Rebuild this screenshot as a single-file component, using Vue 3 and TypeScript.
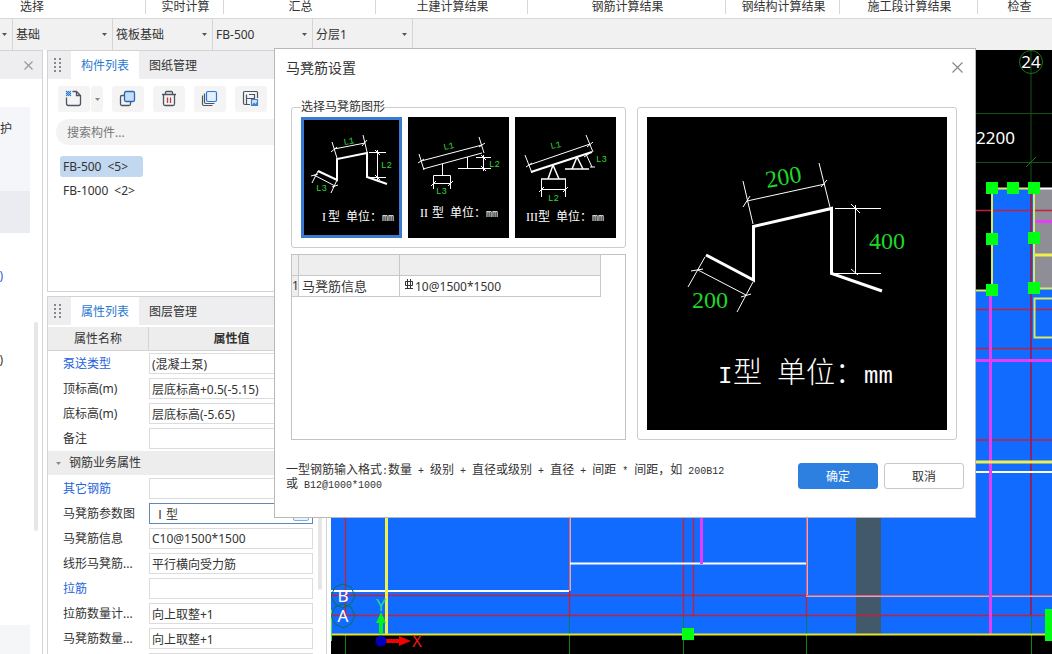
<script setup lang="ts">
import { ref } from 'vue'

interface Label { x: number; y: number; text: string; angle?: number }
interface Shape { name: string; thin: string; thick: string; medium: string; labels: Label[]; numeral: string; captionX: number; captionY: number }
interface Prop { id: string; name: string; value: string; link?: boolean; active?: boolean }

const groups = [
  { name: '选择', width: 'w-first' },
  { name: '实时计算', width: 'w-live' },
  { name: '汇总', width: 'w-sum' },
  { name: '土建计算结果', width: 'w-sum' },
  { name: '钢筋计算结果', width: 'w-rebar' },
  { name: '钢结构计算结果', width: 'w-steel' },
  { name: '施工段计算结果', width: 'w-stage' },
  { name: '检查', width: 'w-check' },
]

const selectors = [
  { label: '构件大类', value: '基础' },
  { label: '构件类型', value: '筏板基础' },
  { label: '构件名称', value: 'FB-500' },
  { label: '分层', value: '分层1' },
]

const components = [
  { name: 'FB-500', count: '<5>' },
  { name: 'FB-1000', count: '<2>' },
]
const selectedComponent = ref(0)
const keyword = ref('')

const basicProps = ref<Prop[]>([
  { id: 'pump', name: '泵送类型', value: '(混凝土泵)', link: true },
  { id: 'top', name: '顶标高(m)', value: '层底标高+0.5(-5.15)' },
  { id: 'bottom', name: '底标高(m)', value: '层底标高(-5.65)' },
  { id: 'note', name: '备注', value: '' },
])
const rebarProps = ref<Prop[]>([
  { id: 'other', name: '其它钢筋', value: '', link: true },
  { id: 'figure', name: '马凳筋参数图', value: 'Ⅰ型', active: true },
  { id: 'info', name: '马凳筋信息', value: 'C10@1500*1500' },
  { id: 'linear', name: '线形马凳筋...', value: '平行横向受力筋' },
  { id: 'tie', name: '拉筋', value: '', link: true },
  { id: 'tiecount', name: '拉筋数量计...', value: '向上取整+1' },
  { id: 'count', name: '马凳筋数量...', value: '向上取整+1' },
  { id: 'area', name: '', value: '' },
])

const shapes: Shape[] = [
  {
    name: 'I型',
    thick: 'M17 54L36 63V42L66 36V60L86 67',
    medium: '',
    thin: 'M31 25L36 41M62 18L66 35M33 32L64 26M30 35L36 30M61 29L66 23M68 35.5H85M66 60.5H85M76.5 33V63M74 33L79 38M74 58L79 63M17 54L11 66M36 63L30 76M13 58L34 69M10 59L17 57M31 70L37 68',
    labels: [{ x: 43, y: 28, text: 'L1', angle: -10 }, { x: 80, y: 51, text: 'L2' }, { x: 15, y: 74, text: 'L3' }],
    numeral: 'I', captionX: 21, captionY: 104,
  },
  {
    name: 'II型',
    thick: '',
    medium: '',
    thin: 'M13 44L74 28M15 52L74 36M11 37L16 53M71 20L76 36M10 46L16 42M71 30L77 26M34.5 47V58M25.5 72V58.5H42.5V72M25 66.5H43M23 69L28 64M40 69L45 64M59.5 40V51M50 51.5H83M68 40.5H83M75.5 38V54M73 38L78 43M73 49L78 54',
    labels: [{ x: 36, y: 33, text: 'L1', angle: -12 }, { x: 81, y: 50, text: 'L2' }, { x: 28, y: 77, text: 'L3' }],
    numeral: 'II', captionX: 12, captionY: 100,
  },
  {
    name: 'III型',
    thick: 'M16 55L77 35',
    medium: 'M38 48L33 62M38 48L44 62M26 62H51M62 40L57 52M62 40L68 52M50 52H74',
    thin: 'M14 48L75 27M10 38L17 56M71 18L78 35M11 50L17 46M72 30L78 25M26.5 62V80M50.5 62V80M26 72.5H51M24 75L29 70M48 75L53 70M71 37L77 50M75 50H80M69 40L75 36',
    labels: [{ x: 36, y: 32, text: 'L1', angle: -12 }, { x: 81, y: 45, text: 'L3' }, { x: 33, y: 84, text: 'L2' }],
    numeral: 'III', captionX: 11, captionY: 104,
  },
]
const selectedShape = ref(0)
const rebarInfo = ref('10@1500*1500')

const hintLines = [
  '一型钢筋输入格式:数量 + 级别 + 直径或级别 + 直径 + 间距 * 间距，如 200B12',
  '或 B12@1000*1000',
]
const splitRuns = (line: string) => (line.match(/[\x20-\x7e]+|[^\x20-\x7e]+/g) ?? []).map((text) => ({ text, latin: /^[\x20-\x7e]/.test(text) }))

const handles = [[992, 188], [1013, 188], [1034, 188], [992, 239], [1034, 238], [992, 290], [1034, 288], [688, 634]]
</script>

<template>
  <div class="app">
    <header class="ribbon">
      <div v-for="g in groups" :key="g.name" class="group" :class="g.width">{{ g.name }}</div>
    </header>

    <div class="selectors">
      <span class="stub"><svg width="5" height="3"><path d="M0 0H5L2.5 3Z" fill="#555" /></svg></span>
      <div v-for="s in selectors" :key="s.label" class="picker">
        <select :aria-label="s.label"><option>{{ s.value }}</option></select>
        <svg width="5" height="3"><path d="M0 0H5L2.5 3Z" fill="#555" /></svg>
      </div>
    </div>

    <main class="workspace">
      <aside class="nav">
        <div class="nav-head">
          <button class="plain" aria-label="关闭导航"><svg width="9" height="9"><path d="M0.5 0.5L8.5 8.5M8.5 0.5L0.5 8.5" stroke="#999" stroke-width="1.2" /></svg></button>
        </div>
        <div class="nav-body">
          <div class="nav-list">
            <div class="nav-block first">护</div>
            <div class="nav-block second"></div>
            <a href="#" class="paren link">)</a>
            <span class="paren">)</span>
            <div class="nav-block last"></div>
          </div>
          <div class="nav-scroll"></div>
        </div>
      </aside>

      <div class="docks">
        <section class="panel list-panel">
          <div class="tabs">
            <svg class="grip" width="7" height="14" fill="#888"><path d="M0 0h2v2h-2zM5 0h2v2h-2zM0 4h2v2h-2zM5 4h2v2h-2zM0 8h2v2h-2zM5 8h2v2h-2zM0 12h2v2h-2zM5 12h2v2h-2z" /></svg>
            <button class="tab on">构件列表</button>
            <button class="tab">图纸管理</button>
          </div>
          <div class="tools">
            <div class="split">
              <button class="tool" aria-label="新建">
                <svg width="32" height="26" fill="none" stroke="#4d5563" stroke-width="1.3">
                  <path d="M8.5 11.5V17.5Q8.5 19.5 10.5 19.5H20.5Q22.5 19.5 22.5 17.5V9.5L18.5 5.5H14.5M18.5 5.5V9.5H22.5" />
                  <path d="M8 5h1v1h-1zM10 5h1v1h-1zM12 5h1v1h-1zM9 6h1v1h-1zM11 6h1v1h-1zM8 7h1v1h-1zM10 7h1v1h-1zM12 7h1v1h-1zM9 8h1v1h-1zM11 8h1v1h-1zM8 9h1v1h-1zM10 9h1v1h-1zM12 9h1v1h-1z" fill="#2878d8" stroke="#2878d8" stroke-width="0.3" />
                </svg>
              </button>
              <button class="tool slim" aria-label="更多新建"><svg width="5" height="3"><path d="M0 0H5L2.5 3Z" fill="#888" /></svg></button>
            </div>
            <button class="tool" aria-label="复制">
              <svg width="32" height="26" fill="none" stroke-width="1.3">
                <rect x="8.5" y="9.5" width="10" height="10" rx="1.5" stroke="#4d5563" />
                <rect x="12.5" y="5.5" width="10" height="10" rx="1.5" fill="#c7dcf8" stroke="#2a67b7" />
              </svg>
            </button>
            <button class="tool" aria-label="删除">
              <svg width="32" height="26" fill="none" stroke="#4d5563" stroke-width="1.3">
                <path d="M9 8.5H23M12.5 8.5V6.5Q12.5 5.5 13.5 5.5H18.5Q19.5 5.5 19.5 6.5V8.5M10.5 8.5V18Q10.5 19.5 12 19.5H20Q21.5 19.5 21.5 18V8.5" />
                <path d="M14.5 11.5V17M17.5 11.5V17" stroke="#c43a3a" />
              </svg>
            </button>
            <button class="tool" aria-label="层间复制">
              <svg width="32" height="26" fill="none" stroke="#4d5563" stroke-width="1.2">
                <path d="M8.5 9.5V18Q8.5 19.5 10 19.5H18.5M10.5 7.5V16Q10.5 17.5 12 17.5H20.5" />
                <rect x="12.5" y="5.5" width="10" height="10" rx="1.5" fill="#e3effd" stroke="#2878d8" />
              </svg>
            </button>
            <button class="tool" aria-label="存档">
              <svg width="32" height="26" fill="none" stroke="#4d5563" stroke-width="1.2">
                <path d="M15 18.5H10Q8.5 18.5 8.5 17V6.5Q8.5 5.5 9.5 5.5H21.5Q22.5 5.5 22.5 6.5V12M11.5 18.5V8.5M11.5 12.5H19.5V8.5H14" />
                <path d="M16.5 13.5H22.5V19.5H16.5Z" fill="#cfe2fa" stroke="#3f82d0" />
                <path d="M17 19L19 16.5L20.5 18L22 16V19Z" fill="#3f82d0" stroke="none" />
              </svg>
            </button>
          </div>
          <input v-model="keyword" class="search" type="search" aria-label="搜索构件" placeholder="搜索构件..." />
          <div class="items">
            <button v-for="(c, i) in components" :key="c.name" class="item" :class="{ on: i === selectedComponent }" @click="selectedComponent = i">
              {{ c.name }}<span class="count">{{ c.count }}</span>
            </button>
          </div>
        </section>

        <section class="panel prop-panel">
          <div class="tabs">
            <svg class="grip" width="7" height="14" fill="#888"><path d="M0 0h2v2h-2zM5 0h2v2h-2zM0 4h2v2h-2zM5 4h2v2h-2zM0 8h2v2h-2zM5 8h2v2h-2zM0 12h2v2h-2zM5 12h2v2h-2z" /></svg>
            <button class="tab on">属性列表</button>
            <button class="tab">图层管理</button>
          </div>
          <div class="prop-body">
            <table class="props">
              <thead>
                <tr><th class="name">属性名称</th><th class="value">属性值</th></tr>
              </thead>
              <tbody>
                <tr v-for="p in basicProps" :key="p.id">
                  <td class="name"><label :for="p.id" :class="{ link: p.link }">{{ p.name }}</label></td>
                  <td><input :id="p.id" v-model="p.value" type="text" /></td>
                </tr>
                <tr class="section">
                  <td colspan="2"><svg width="5" height="4"><path d="M0 0H5L2.5 3Z" fill="#888" /></svg>钢筋业务属性</td>
                </tr>
                <tr v-for="p in rebarProps" :key="p.id">
                  <td class="name"><label :for="p.id" :class="{ link: p.link }">{{ p.name }}</label></td>
                  <td>
                    <div class="field" :class="{ active: p.active }">
                      <input :id="p.id" v-model="p.value" type="text" />
                      <button v-if="p.active" class="more" aria-label="选择参数图"></button>
                    </div>
                  </td>
                </tr>
              </tbody>
            </table>
            <div class="prop-scroll"></div>
          </div>
        </section>
      </div>

      <section class="canvas">
        <svg viewBox="331 50 721 604" preserveAspectRatio="xMinYMin slice" fill="none">
          <path d="M331 290H992V188H1052V634H331Z" fill="#126bff" />
          <path d="M1034 188H1052V288H1034Z" fill="#8f8d96" />
          <path d="M856 500H881V634H856Z" fill="#42586b" />
          <path d="M976 113.5H1052M976 162.5H1052M1031 50V188" stroke="#155215" />
          <path d="M1026 167L1036 157" stroke="#1c7a1c" />
          <g stroke="#c4203c" stroke-width="1.4">
            <path d="M976 210.5H1052M976 309.5H1052M976 348.5H1052M976 440H1052" />
            <path d="M345.5 500V615M683.5 500V615M693.5 500V615M331 595.5H806M331 615.5H1046M569.5 591V615M806.5 596V615" />
          </g>
          <path d="M1031 188V615" stroke="#8c2468" stroke-width="2" />
          <path d="M569.5 615V634M683.5 615V634M806.5 615V634M1031.5 615V634" stroke="#0b7a58" />
          <path d="M345.5 634V654M569.5 634V654M683.5 634V654M806.5 634V654M1031.5 634V654" stroke="#148014" />
          <path d="M570 500V591M807 500V596M806 596H1052" stroke="#d8a8c8" stroke-width="2" />
          <path d="M569.5 500V591M806.5 500V595.5H1052" stroke="#e06070" />
          <path d="M331 591H569M570 563.5H806M976 472H1052M1040 188.5H1052" stroke="#fff" stroke-width="2" />
          <path d="M990.5 290V634M701.5 500V564M976 360.5H1052M1034 221.5H1052" stroke="#e63cf5" stroke-width="3" />
          <path d="M386.5 500V634M976 462H1052M1034 255H1052" stroke="#eef04c" stroke-width="3" />
          <path d="M976 290.5H992V188.5H1034V288.5H1052M1052 298.5H1034.5V337.5H1052" stroke="#dcea60" stroke-width="2" />
          <path d="M331 634.5H1052" stroke="#dfe632" stroke-width="2" />
          <path d="M331.5 610V641" stroke="#36e84a" />
          <path v-for="(h, i) in handles" :key="i" :d="`M${h[0] - 6} ${h[1] - 6}h12v12h-12z`" fill="#00ff12" />
          <path d="M1045 609H1052V641H1045Z" fill="#00ff12" />
          <circle cx="1031" cy="62" r="11.5" stroke="#147a14" />
          <path d="M343 584L351 587L355 596L351 604L343 608L335 604L331 596L335 587ZM343 604L351 607L355 616L351 624L343 628L335 624L331 616L335 607Z" stroke="#087050" />
          <g class="cad-text" fill="#fff">
            <text x="1031" y="68" text-anchor="middle">24</text>
            <text x="976" y="144">2200</text>
            <text x="343" y="602" text-anchor="middle">B</text>
            <text x="343" y="622" text-anchor="middle">A</text>
            <text x="381" y="611" text-anchor="middle" fill="#20d8a0">Y</text>
            <text x="417" y="647" text-anchor="middle" fill="#f01818">X</text>
          </g>
          <path d="M379 634V623H376L381 612L386 623H383V634Z" fill="#00f020" />
          <path d="M386 639H399V636L411 641L399 646V643H386Z" fill="#f40000" />
          <circle cx="381" cy="641" r="5.5" fill="#0000b8" />
        </svg>
      </section>
    </main>

    <div class="dialog" role="dialog" aria-labelledby="dialog-title">
      <div class="dialog-head">
        <h1 id="dialog-title">马凳筋设置</h1>
        <button class="plain" aria-label="关闭"><svg width="11" height="11"><path d="M0.5 0.5L10.5 10.5M10.5 0.5L0.5 10.5" stroke="#888" stroke-width="1.2" /></svg></button>
      </div>
      <div class="dialog-body">
        <div class="left">
          <fieldset>
            <legend>选择马凳筋图形</legend>
            <div class="thumbs">
              <button v-for="(s, i) in shapes" :key="s.name" class="thumb" :class="{ on: i === selectedShape }" :aria-label="s.name" @click="selectedShape = i">
                <svg viewBox="0 0 101 121" fill="none" stroke="#fff">
                  <path :d="s.thin" />
                  <path v-if="s.medium" :d="s.medium" stroke-width="1.5" />
                  <path v-if="s.thick" :d="s.thick" stroke-width="2" />
                  <g class="dim" stroke="none">
                    <text v-for="l in s.labels" :key="l.text" :x="l.x" :y="l.y" :transform="l.angle ? `rotate(${l.angle} ${l.x} ${l.y})` : undefined">{{ l.text }}</text>
                  </g>
                  <g class="caption" stroke="none">
                    <text class="numeral" :x="s.captionX" :y="s.captionY">{{ s.numeral }}</text>
                    <text :x="s.captionX + (s.numeral === 'I' ? 6 : 12)" :y="s.captionY">型</text>
                    <text :x="s.captionX + (s.numeral === 'I' ? 24 : 30)" :y="s.captionY">单位：</text>
                    <text class="unit" :x="s.captionX + (s.numeral === 'I' ? 60 : 66)" :y="s.captionY">mm</text>
                  </g>
                </svg>
              </button>
            </div>
          </fieldset>
          <div class="sheet">
            <table>
              <thead><tr><th class="c1"></th><th class="c2"></th><th class="c3"></th></tr></thead>
              <tbody>
                <tr>
                  <th class="c1">1</th>
                  <td class="c2"><label for="rebar-info">马凳筋信息</label></td>
                  <td class="c3">
                    <div class="rebar">
                      <svg width="10" height="10" fill="none" stroke="#333"><path d="M1.5 2.5H8.5V6.5H1.5ZM3.5 0V9M6.5 0V9M1 9.5H9" /></svg>
                      <input id="rebar-info" v-model="rebarInfo" type="text" />
                    </div>
                  </td>
                </tr>
              </tbody>
            </table>
          </div>
        </div>
        <div class="preview">
          <svg viewBox="0 0 300 313" fill="none" stroke="#fff">
            <rect width="300" height="313" fill="#000" stroke="none" />
            <path d="M59 138L106.5 163V109.5L184.5 91.5V156.5L235 174" stroke-width="3" />
            <path d="M96 64L106 107M172 46L183 90M100 84L178 67M96 90L103 79M174 70L180 63M188 91.5H234M185 156.5H234M208.5 88V157M204 87L213 96M204 152L211 158M58 140L41 170M106 165L90 195M51 153L99 178M44 154L56 152M94 180L104 177" />
            <g class="big-dim" stroke="none">
              <text x="120" y="71" transform="rotate(-10 120 71)">200</text>
              <text x="222" y="132">400</text>
              <text x="45" y="191">200</text>
            </g>
            <g class="big-caption" stroke="none">
              <text class="unit" x="71" y="266">I</text>
              <text x="86" y="266">型</text>
              <text x="130" y="266">单位：</text>
              <text class="unit" x="217" y="266">mm</text>
            </g>
          </svg>
        </div>
      </div>
      <div class="dialog-foot">
        <p class="hint">
          <span v-for="line in hintLines" :key="line" class="hint-line"><span v-for="(r, i) in splitRuns(line)" :key="i" :class="{ latin: r.latin }">{{ r.text }}</span></span>
        </p>
        <div class="actions">
          <button class="btn primary">确定</button>
          <button class="btn">取消</button>
        </div>
      </div>
    </div>
  </div>
</template>

<style>
body { overflow: hidden; }
</style>

<style scoped>
.app, .app * { box-sizing: border-box; }
.app {
  position: relative;
  display: flex;
  flex-direction: column;
  height: 100vh;
  overflow: hidden;
  background: #fff;
  color: #333;
  font: 12px/16px "Noto Sans", "Noto Sans CJK SC", sans-serif;
}
button, input, select {
  margin: 0;
  padding: 0;
  border: 0;
  background: none;
  color: inherit;
  font: inherit;
  outline: none;
}
svg { display: block; flex: none; }
table { border-collapse: separate; border-spacing: 0; }
th, td { padding: 0; font-weight: 400; }
.plain { display: flex; }

.ribbon { display: flex; flex: none; height: 19px; border-bottom: 1px solid #d8d8d8; }
.group { flex: none; height: 14px; border-right: 1px solid #d8d8d8; line-height: 14px; text-align: center; white-space: nowrap; }
.w-first { width: 146px; padding-left: 20px; text-align: left; }
.w-live { width: 78px; padding-left: 2px; }
.w-sum { width: 152px; padding-left: 2px; }
.w-rebar { width: 198px; padding-left: 2px; }
.w-steel { width: 114px; padding-left: 2px; }
.w-stage { width: 138px; padding-left: 2px; }
.w-check { width: 84px; }

.selectors { display: flex; flex: none; height: 31px; background: #f1f1f1; }
.stub { display: flex; align-items: center; width: 13px; padding-left: 2px; border-right: 1px solid #d5d5d5; }
.picker { display: flex; align-items: center; width: 100px; padding: 0 5px 0 3px; border-right: 1px solid #d5d5d5; }
.picker select { flex: 1; min-width: 0; height: 30px; appearance: none; }

.workspace { display: flex; flex: 1; min-height: 0; }
.nav { display: flex; flex-direction: column; width: 43px; border: 1px solid #d3d3d3; border-width: 1px 1px 0 0; }
.nav-head { display: flex; align-items: center; justify-content: flex-end; flex: none; height: 28px; padding-right: 9px; background: #eeeef0; }
.nav-body { display: flex; flex: 1; min-height: 0; gap: 4px; }
.nav-list { display: flex; flex-direction: column; width: 30px; padding-top: 28px; overflow: hidden; }
.nav-block { flex: none; }
.first { height: 84px; padding-top: 14px; background: #f5f6f9; }
.second { height: 42px; margin-bottom: 35px; background: #ebecf1; }
.paren { display: flex; justify-content: flex-end; flex: none; width: 3px; height: 16px; margin-bottom: 68px; }
.paren.link { text-decoration: none; }
.last { height: 30px; margin-top: 189px; background: #f5f6f8; }
.nav-scroll { width: 4px; height: 209px; margin-top: 243px; border-radius: 2px; background: #e6e6e6; }

.docks { display: flex; flex-direction: column; gap: 4px; width: 280px; margin: 0 4px; }
.panel { display: flex; flex-direction: column; border: 1px solid #d3d3d3; }
.list-panel { flex: none; height: 242px; }
.prop-panel { flex: 1; min-height: 0; border-bottom: 0; }
.tabs { display: flex; align-items: center; flex: none; height: 28px; background: #eeeef0; }
.grip { margin: 0 10px 0 6px; }
.tab { width: 68px; height: 28px; padding-top: 2px; text-align: center; }
.tab.on { background: #fff; color: #2878d0; }
.tools { display: flex; gap: 9px; padding: 7px 0 7px 10px; }
.split { display: flex; gap: 1px; }
.tool { display: flex; width: 32px; height: 26px; border-radius: 3px; background: #f4f4f5; }
.slim { align-items: center; justify-content: center; width: 12px; }
.search { flex: none; height: 26px; margin: 0 0 0 8px; padding: 0 11px; border-radius: 13px; background: #f3f3f3; appearance: none; }
.search::placeholder { color: #777; opacity: 1; }
.items { display: flex; flex-direction: column; align-items: flex-start; gap: 3px; padding: 11px 0 0 12px; }
.item { min-width: 83px; height: 21px; padding: 0 3px; border-radius: 3px; text-align: left; white-space: nowrap; }
.item.on { background: #c1d8f0; }
.count { margin-left: 6px; }

.prop-body { display: flex; gap: 4px; flex: 1; min-height: 0; overflow: hidden; }
.props { align-self: flex-start; width: 266px; padding-top: 2px; table-layout: fixed; }
.props th { height: 24px; padding-top: 1px; border-bottom: 1px solid #d3d3d3; background: #ededed; }
.props th.name { width: 101px; border-right: 1px solid #d3d3d3; text-align: center; }
.props th.value { font-weight: 700; }
.props td { height: 25px; }
.props td.name { padding-left: 15px; white-space: nowrap; }
.props label.link, .link { color: #2563d9; }
.props input { display: block; width: 164px; height: 21px; padding: 0 2px; border: 1px solid #dcdcdc; background: #fff; }
.field { position: relative; width: 164px; }
.field.active input { padding-left: 4px; border-color: #5f87b8; }
.more { position: absolute; right: 4px; top: 2px; width: 16px; height: 16px; border: 1px solid #7fb0dc; border-radius: 2px; background: #e8f3fc; }
.section td { height: 25px; background: #ededed; border-bottom: 1px solid #fff; padding-left: 8px; }
.section svg { display: inline-block; margin-right: 8px; vertical-align: middle; }
.prop-scroll { width: 4px; height: 265px; border-radius: 2px; background: #e6e6e6; }

.canvas { flex: 1; min-width: 0; overflow: hidden; background: #000; }
.canvas svg { width: 100%; height: 100%; }
.cad-text { font: 17px "Noto Sans", sans-serif; }

.dialog {
  position: absolute;
  top: 48px;
  left: 274px;
  display: flex;
  flex-direction: column;
  width: 702px;
  height: 470px;
  border: 1px solid #b8b8b8;
  background: #fff;
}
.dialog-head { display: flex; align-items: center; justify-content: space-between; height: 37px; padding: 0 12px 0 11px; }
.dialog-head h1 { margin: 0; font-size: 14px; font-weight: 400; line-height: 20px; }
.dialog-body { display: grid; grid-template-columns: 335px 1fr; gap: 11px; height: 354px; padding: 13px 18px 0 16px; }
.left { display: flex; flex-direction: column; gap: 6px; min-height: 0; }
fieldset { min-width: 0; margin: 0; padding: 2px 9px 9px; border: 1px solid #ccc; border-radius: 3px; }
legend { height: 16px; padding: 0; line-height: 16px; }
.thumbs { display: flex; gap: 6px; }
.thumb { width: 101px; height: 121px; background: #000; }
.thumb.on { box-shadow: inset 0 0 0 3px #3a7bd0; }
.thumb svg { width: 100%; height: 100%; }
.dim { fill: #30d838; font: 9px "Liberation Mono", monospace; }
.caption { fill: #fff; font: 12px "Noto Sans CJK SC", sans-serif; }
.caption .unit { font: 10px "DejaVu Sans Mono", monospace; }
.caption .numeral { font: 12px "Liberation Serif", serif; }
.sheet { flex: 1; border: 1px solid #c3c3c3; }
.sheet table { width: 309px; table-layout: fixed; }
.sheet th, .sheet td { height: 21px; border: 0 solid #c8c8c8; border-width: 0 1px 1px 0; }
.sheet th { background: #eee; }
.sheet .c1 { width: 7px; }
.sheet .c2 { width: 101px; }
.sheet .c3 { width: 201px; }
.sheet td.c2 { padding-left: 3px; font-size: 13px; }
.rebar { display: flex; gap: 1px; padding-left: 4px; }
.rebar svg { margin-top: 2px; }
.rebar input { flex: 1; min-width: 0; height: 18px; }
.preview { margin-top: 8px; padding: 9px; border: 1px solid #ccc; border-radius: 3px; }
.preview svg { width: 100%; height: 100%; }
.big-dim { fill: #1fd62a; font: 24px "Liberation Serif", serif; }
.big-caption { fill: #fff; font: 300 29px "Noto Sans CJK SC", sans-serif; }
.big-caption .unit { font: 24px "Liberation Mono", monospace; }
.dialog-foot { display: flex; justify-content: space-between; padding: 22px 11px 0; }
.hint { margin: 0; font-family: "Noto Sans CJK SC", sans-serif; }
.hint-line { display: block; height: 14px; line-height: 14px; white-space: pre; }
.latin { font: 10px/14px "Liberation Mono", monospace; }
.actions { display: flex; gap: 6px; padding-top: 1px; }
.btn { width: 80px; height: 26px; padding-top: 1px; border: 1px solid #c8c8c8; border-radius: 3px; background: #fff; }
.btn.primary { border-color: #2d80e0; background: #2d80e0; color: #fff; }
</style>
